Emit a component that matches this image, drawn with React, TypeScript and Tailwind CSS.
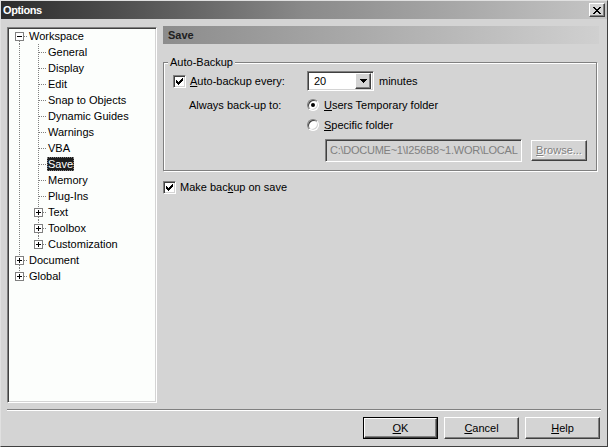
import React from "react";

type CellProps = { up?: boolean; down?: boolean; right?: boolean; box?: "plus" | "minus" };

function TreeCell({ up, down, right, box }: CellProps) {
  const dash = "1 1";
  return (
    <svg width="19" height="16" className="shrink-0" shapeRendering="crispEdges">
      {up && <line x1="10.5" y1="0" x2="10.5" y2={box ? 4 : 8.5} stroke="#808080" strokeDasharray={dash} />}
      {down && <line x1="10.5" y1={box ? 13 : 8} x2="10.5" y2="16" stroke="#808080" strokeDasharray={dash} />}
      {right && <line x1={box ? 15 : 11} y1="8.5" x2="19" y2="8.5" stroke="#808080" strokeDasharray={dash} />}
      {box && (
        <>
          <rect x="6.5" y="4.5" width="8" height="8" fill="#ffffff" stroke="#808080" />
          <line x1="8" y1="8.5" x2="13" y2="8.5" stroke="#000" />
          {box === "plus" && <line x1="10.5" y1="6" x2="10.5" y2="11" stroke="#000" />}
        </>
      )}
    </svg>
  );
}

type Row = { label: string; cells: CellProps[]; selected?: boolean };

const childNames = [
  "General",
  "Display",
  "Edit",
  "Snap to Objects",
  "Dynamic Guides",
  "Warnings",
  "VBA",
  "Save",
  "Memory",
  "Plug-Ins",
  "Text",
  "Toolbox",
  "Customization",
];

const rows: Row[] = [
  { label: "Workspace", cells: [{ down: true, right: true, box: "minus" }] },
  ...childNames.map((n, i) => {
    const last = i === childNames.length - 1;
    const expandable = n === "Text" || n === "Toolbox" || n === "Customization";
    return {
      label: n,
      selected: n === "Save",
      cells: [
        { up: true, down: true },
        { up: true, down: !last, right: true, box: expandable ? ("plus" as const) : undefined },
      ],
    };
  }),
  { label: "Document", cells: [{ up: true, down: true, right: true, box: "plus" }] },
  { label: "Global", cells: [{ up: true, right: true, box: "plus" }] },
];

function CheckBox() {
  return (
    <div className="w-[13px] h-[13px] shrink-0 bg-white border border-t-[#808080] border-l-[#808080] border-b-white border-r-white shadow-[inset_1px_1px_0_#404040,inset_-1px_-1px_0_#d4d4d4] flex items-center justify-center">
      <svg width="7" height="7" viewBox="0 0 7 7" shapeRendering="crispEdges">
        <path d="M0 2h1v1h1v1h1v-1h1v-1h1v-1h1v-1h1v3h-1v1h-1v1h-1v1h-1v1h-1v-1h-1v-1h-1v-1h-1z" fill="#000" />
      </svg>
    </div>
  );
}

function Radio({ checked }: { checked?: boolean }) {
  return (
    <div className="w-[12px] h-[12px] shrink-0 rounded-full bg-white border border-t-[#808080] border-l-[#808080] border-b-white border-r-white shadow-[inset_1px_1px_0_#404040,inset_-1px_-1px_0_#d4d4d4] flex items-center justify-center">
      {checked && <div className="w-[4px] h-[4px] rounded-full bg-black" />}
    </div>
  );
}

function Btn({ children, isDefault }: { children: React.ReactNode; isDefault?: boolean }) {
  const inner = (
    <div className="w-full h-full bg-[#d4d4d4] border border-t-white border-l-white border-b-[#404040] border-r-[#404040] shadow-[inset_-1px_-1px_0_#808080] flex items-center justify-center">
      {children}
    </div>
  );
  return isDefault ? (
    <div className="w-[75px] h-[22px] border border-black">{inner}</div>
  ) : (
    <div className="w-[75px] h-[22px]">{inner}</div>
  );
}

export default function App() {
  return (
    <div className="w-[608px] h-[447px] bg-[#d4d4d4] text-black font-['Liberation_Sans',Arial,sans-serif] text-[11px] leading-[13px] flex flex-col border border-t-[#e0e0e0] border-l-[#e0e0e0] border-b-[#404040] border-r-[#404040] overflow-hidden select-none">
      {/* Title bar */}
      <div className="h-[18px] shrink-0 bg-gradient-to-r from-[#2c2c2c] via-[#8a8a8a] to-[#c6c6c6] flex items-center pl-[2px] pr-[2px]">
        <span className="text-white font-bold text-[11px] tracking-[-0.4px]">Options</span>
        <div className="ml-auto w-[16px] h-[14px] bg-[#d4d4d4] border border-t-white border-l-white border-b-[#404040] border-r-[#404040] shadow-[inset_-1px_-1px_0_#808080] flex items-center justify-center">
          <svg width="8" height="7" viewBox="0 0 8 7" shapeRendering="crispEdges">
            <path d="M0 0h2v1h1v1h2v-1h1v-1h2v1h-1v1h-1v1h-1v1h1v1h1v1h1v1h-2v-1h-1v-1h-2v1h-1v1h-2v-1h1v-1h1v-1h1v-1h-1v-1h-1v-1h-1z" fill="#000" />
          </svg>
        </div>
      </div>

      {/* Body */}
      <div className="flex flex-1 pl-[6px] pr-[8px] pt-[8px]">
        {/* Tree */}
        <div className="w-[150px] h-[376px] shrink-0 bg-[#fcfefc] border border-t-[#808080] border-l-[#808080] border-b-white border-r-white shadow-[inset_1px_1px_0_#404040,inset_-1px_-1px_0_#d4d4d4] pl-[1px]">
          {rows.map((r) => (
            <div key={r.label} className="h-[16px] flex items-center">
              {r.cells.map((c, i) => (
                <TreeCell key={i} {...c} />
              ))}
              <span
                className={
                  r.selected
                    ? "h-[14px] px-[1px] bg-[#1c1c1c] text-white outline-1 outline-dotted outline-[#808080] -outline-offset-1 flex items-center"
                    : "h-[14px] px-[1px] flex items-center"
                }
              >
                {r.label}
              </span>
            </div>
          ))}
        </div>

        {/* Right pane */}
        <div className="flex-1 ml-[6px] -mt-[1px] flex flex-col">
          <div className="h-[18px] bg-gradient-to-r from-[#8c8c8c] to-[#d0d0d0] flex items-center pl-[5px] font-bold text-[#202020]">
            Save
          </div>

          <fieldset className="mt-[12px] mr-[2px] border border-[#808080] shadow-[1px_1px_0_#ffffff,inset_1px_1px_0_#ffffff] p-0">
            <legend className="ml-[4px] px-[2px] bg-[#d4d4d4] leading-[13px]">Auto-Backup</legend>
            <div className="pl-[9px] pt-[2px] pb-[8px] flex flex-col">
              {/* Row 1 */}
              <div className="h-[20px] flex items-center">
                <div className="w-[134px] flex items-center">
                  <CheckBox />
                  <span className="ml-[4px]">
                    <span className="underline underline-offset-1">A</span>uto-backup every:
                  </span>
                </div>
                <div className="w-[67px] h-[20px] bg-white border border-t-[#808080] border-l-[#808080] border-b-white border-r-white shadow-[inset_1px_1px_0_#404040,inset_-1px_-1px_0_#d4d4d4] flex items-center p-[2px]">
                  <span className="flex-1 pl-[4px]">20</span>
                  <div className="w-[16px] h-[16px] bg-[#d4d4d4] border border-t-white border-l-white border-b-[#404040] border-r-[#404040] shadow-[inset_-1px_-1px_0_#808080] flex items-center justify-center">
                    <svg width="7" height="4" viewBox="0 0 7 4" shapeRendering="crispEdges">
                      <path d="M0 0h7v1h-1v1h-1v1h-1v1h-1v-1h-1v-1h-1v-1h-1z" fill="#000" />
                    </svg>
                  </div>
                </div>
                <span className="ml-[5px]">minutes</span>
              </div>

              {/* Row 2 */}
              <div className="mt-[4px] h-[20px] flex items-center">
                <div className="w-[134px] pl-[16px]">Always back-up to:</div>
                <Radio checked />
                <span className="ml-[5px]">
                  <span className="underline underline-offset-1">U</span>sers Temporary folder
                </span>
              </div>

              {/* Row 3 */}
              <div className="h-[20px] flex items-center">
                <div className="w-[134px]" />
                <Radio />
                <span className="ml-[5px]">
                  <span className="underline underline-offset-1">S</span>pecific folder
                </span>
              </div>

              {/* Row 4 */}
              <div className="mt-[4px] flex items-center">
                <div className="w-[152px]" />
                <div className="w-[197px] h-[23px] bg-[#d4d4d4] border border-t-[#808080] border-l-[#808080] border-b-white border-r-white shadow-[inset_1px_1px_0_#404040,inset_-1px_-1px_0_#d4d4d4] flex items-center pl-[4px] overflow-hidden whitespace-nowrap text-[#808080] tracking-[-0.25px]">
                  C:\DOCUME~1\I256B8~1.WOR\LOCAL
                </div>
                <div className="ml-[9px] w-[56px] h-[21px] bg-[#d4d4d4] border border-t-white border-l-white border-b-[#404040] border-r-[#404040] shadow-[inset_-1px_-1px_0_#808080] flex items-center justify-center text-[#808080] [text-shadow:1px_1px_0_#ffffff]">
                  <span>
                    <span className="underline underline-offset-1">B</span>rowse...
                  </span>
                </div>
              </div>
            </div>
          </fieldset>

          <div className="mt-[10px] flex items-center h-[13px]">
            <CheckBox />
            <span className="ml-[4px]">
              Make bac<span className="underline underline-offset-1">k</span>up on save
            </span>
          </div>
        </div>
      </div>

      {/* Separator */}
      <div className="mx-[6px] mr-[6px] h-[2px] shrink-0 border-t border-t-[#808080] border-b border-b-white" />

      {/* Buttons */}
      <div className="h-[22px] mt-[6px] mb-[7px] shrink-0 flex justify-end gap-[6px] pr-[7px]">
        <Btn isDefault>
          <span>
            <span className="underline underline-offset-1">O</span>K
          </span>
        </Btn>
        <Btn>
          <span>
            <span className="underline underline-offset-1">C</span>ancel
          </span>
        </Btn>
        <Btn>
          <span>
            <span className="underline underline-offset-1">H</span>elp
          </span>
        </Btn>
      </div>
    </div>
  );
}
